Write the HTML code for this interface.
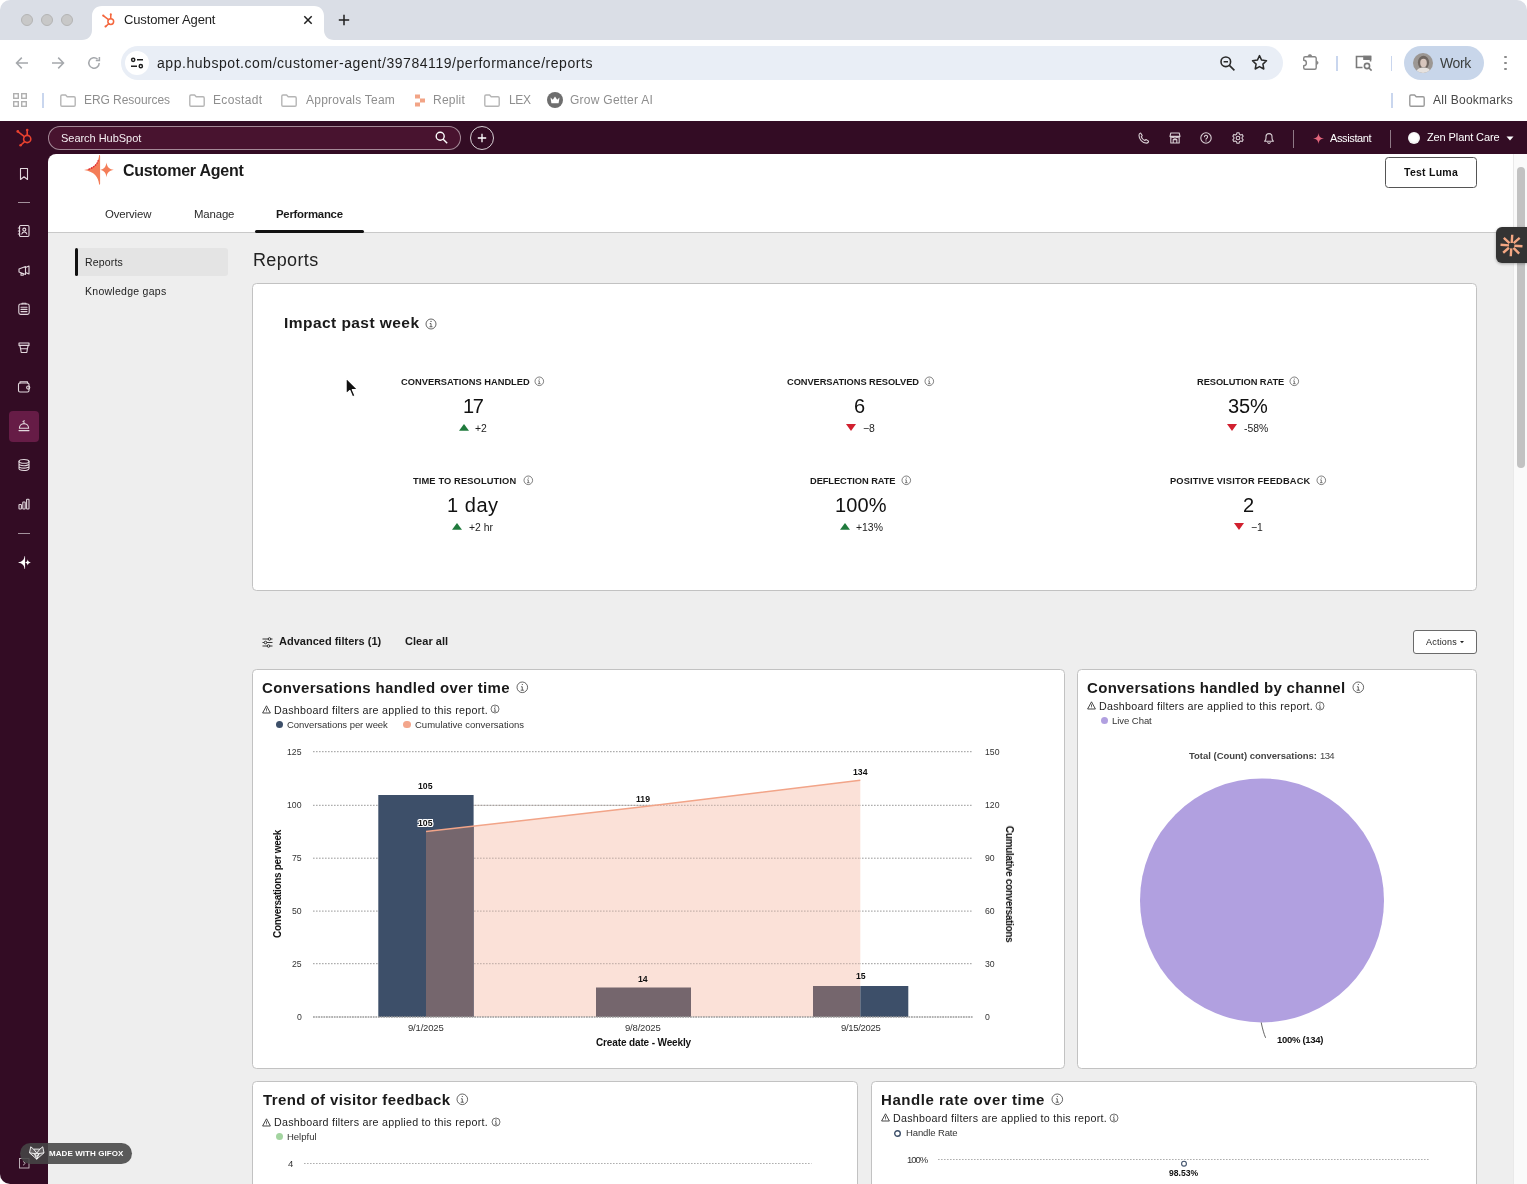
<!DOCTYPE html>
<html lang="en"><head><meta charset="utf-8"><title>Customer Agent</title>
<style>
html,body{margin:0;padding:0;}
body{width:1527px;height:1184px;overflow:hidden;position:relative;background:#fff;font-family:"Liberation Sans",sans-serif;-webkit-font-smoothing:antialiased;}
.t{position:absolute;white-space:nowrap;margin:0;padding:0;will-change:transform;}
.b{position:absolute;box-sizing:border-box;}
svg{position:absolute;overflow:visible;}
</style></head><body>
<div class="b" style="left:0px;top:0px;width:1527px;height:40px;background:#dadee6;border-radius:10px 10px 0 0;"></div>
<svg style="left:82px;top:5px" width="252" height="35" viewBox="0 0 252 35"><path d="M0 35 C6 35 10 31 10 25 L10 11 C10 5 14 1 20 1 L232 1 C238 1 242 5 242 11 L242 25 C242 31 246 35 252 35 Z" fill="#fff"/></svg>
<div class="b" style="left:0px;top:40px;width:1527px;height:81px;background:#fff;border-radius:9px 9px 0 0;"></div>
<div class="b" style="left:21px;top:14px;width:12px;height:12px;background:#c8c8c8;border-radius:50%;border:0.5px solid #b4b4b4;"></div>
<div class="b" style="left:41px;top:14px;width:12px;height:12px;background:#c8c8c8;border-radius:50%;border:0.5px solid #b4b4b4;"></div>
<div class="b" style="left:61px;top:14px;width:12px;height:12px;background:#c8c8c8;border-radius:50%;border:0.5px solid #b4b4b4;"></div>
<svg style="left:100.8px;top:12.2px" width="16" height="16" viewBox="0 0 20 20" fill="none" stroke="#f4673e" stroke-width="1.9" stroke-linecap="round"><circle cx="12.2" cy="12" r="3.6"/><path d="M12.2 8.2V3.6M9.4 9.6L3.2 4.8M9.6 14.6L6 18"/><circle cx="12.2" cy="3" r="1.3" fill="#f4673e" stroke="none"/><circle cx="2.8" cy="4.4" r="1.4" fill="#f4673e" stroke="none"/><circle cx="5.6" cy="18.2" r="1.3" fill="#f4673e" stroke="none"/></svg>
<div class="t" style="left:124.2px;top:10px;font-size:13px;line-height:19px;color:#1f1f1f;font-weight:400;letter-spacing:-0.137px;">Customer Agent</div>
<svg style="left:303px;top:15px" width="10" height="10" viewBox="0 0 10 10" stroke="#1f1f1f" stroke-width="1.5" fill="none"><path d="M1.3 1.3L8.7 8.7M8.7 1.3L1.3 8.7"/></svg>
<svg style="left:338px;top:14px" width="12" height="12" viewBox="0 0 12 12" stroke="#1f1f1f" stroke-width="1.5" fill="none"><path d="M6 0.8V11.2M0.8 6H11.2"/></svg>
<svg style="left:15px;top:56px" width="14" height="14" viewBox="0 0 14 14" stroke="#a5a8ac" stroke-width="1.5" fill="none"><path d="M13 7H1.5M6.8 1.6L1.5 7l5.3 5.4"/></svg>
<svg style="left:51px;top:56px" width="14" height="14" viewBox="0 0 14 14" stroke="#a5a8ac" stroke-width="1.5" fill="none"><path d="M1 7h11.5M7.2 1.6L12.5 7l-5.3 5.4"/></svg>
<svg style="left:87px;top:56px" width="14" height="14" viewBox="0 0 14 14" stroke="#a5a8ac" stroke-width="1.5" fill="none"><path d="M12.2 7a5.2 5.2 0 1 1-1.6-3.8"/><path d="M12.4 1v3.6H8.8" /></svg>
<div class="b" style="left:121px;top:46px;width:1162px;height:34px;background:#e9eef6;border-radius:17px;"></div>
<div class="b" style="left:125px;top:51px;width:24px;height:24px;background:#fff;border-radius:50%;"></div>
<svg style="left:130px;top:56px" width="14" height="14" viewBox="0 0 14 14" stroke="#1f1f1f" stroke-width="1.5" fill="none"><circle cx="3.2" cy="3.8" r="1.6"/><path d="M7 3.8h6M1 10.2h6"/><circle cx="10.8" cy="10.2" r="1.6"/></svg>
<div class="t" style="left:157.0px;top:53px;font-size:14px;line-height:20px;color:#1f1f1f;font-weight:400;letter-spacing:0.548px;">app.hubspot.com/customer-agent/39784119/performance/reports</div>
<svg style="left:1219px;top:55px" width="17" height="17" viewBox="0 0 17 17" stroke="#2a2a2a" stroke-width="1.6" fill="none"><circle cx="6.8" cy="6.8" r="4.8"/><path d="M10.4 10.4L15.4 15.4M4.6 6.8h4.4"/></svg>
<svg style="left:1251px;top:54px" width="17" height="17" viewBox="0 0 17 17" stroke="#2a2a2a" stroke-width="1.5" fill="none" stroke-linejoin="round"><path d="M8.5 1.6l2.1 4.5 4.9.6-3.6 3.4.9 4.9-4.3-2.4-4.3 2.4.9-4.9L1.5 6.7l4.9-.6z"/></svg>
<svg style="left:1300px;top:50px" width="22" height="22" viewBox="0 0 22 22" stroke="#868686" stroke-width="1.400" fill="none" stroke-linejoin="round"><path d="M5.200 6.700H14.700a1.500 1.500 0 0 1 1.500 1.500V17.700a1.500 1.500 0 0 1-1.500 1.500H5.200a1.500 1.500 0 0 1-1.500-1.500V15.600a2.700 2.700 0 0 0 0-5.400V8.200a1.500 1.500 0 0 1 1.500-1.500z"/><path d="M8 6.400a1.900 2 0 0 1 3.800 0zM16.600 10.900a2 1.900 0 0 1 0 3.700z" fill="#868686" stroke-width="0.600"/></svg>
<div class="b" style="left:1336px;top:55.5px;width:1.5px;height:15px;background:#c9d6ee;"></div>
<svg style="left:1355px;top:55px" width="18" height="17" viewBox="0 0 18 17" stroke="#7a7a7a" stroke-width="1.6" fill="none"><path d="M7.5 12.5H1.5V1.5h14v5"/><path d="M9 1.5h6.5v2.6H9z" fill="#7a7a7a"/><circle cx="12" cy="11" r="2.6"/><path d="M14 13l2.6 2.6"/></svg>
<div class="b" style="left:1390.5px;top:55.5px;width:1.5px;height:15px;background:#c9d6ee;"></div>
<div class="b" style="left:1404px;top:46px;width:80px;height:34px;background:#c8d6ea;border-radius:17px;"></div>
<div class="b" style="left:1413px;top:53px;width:20px;height:20px;border-radius:50%;overflow:hidden;background:#9c9793;"><svg style="left:0;top:0" width="20" height="20" viewBox="0 0 20 20"><ellipse cx="10.500" cy="9.500" rx="5.600" ry="6.800" fill="#6f6660"/><ellipse cx="10.500" cy="10" rx="3.300" ry="4.200" fill="#d8c6bd"/><path d="M3 20c.5-4 3.500-5.500 7.500-5.500s7 1.500 7.500 5.500z" fill="#e6e2df"/></svg></div>
<div class="t" style="left:1440.0px;top:53px;font-size:14px;line-height:20px;color:#3c3f3e;font-weight:400;letter-spacing:-0.352px;">Work</div>
<div class="b" style="left:1504px;top:55.8px;width:2.6px;height:2.6px;background:#8a8a8a;border-radius:50%;"></div>
<div class="b" style="left:1504px;top:61.8px;width:2.6px;height:2.6px;background:#8a8a8a;border-radius:50%;"></div>
<div class="b" style="left:1504px;top:67.8px;width:2.6px;height:2.6px;background:#8a8a8a;border-radius:50%;"></div>
<svg style="left:13px;top:93px" width="14" height="14" viewBox="0 0 14 14" stroke="#b0b0b0" stroke-width="1.4" fill="none"><rect x="0.7" y="0.7" width="4.6" height="4.6"/><rect x="8.7" y="0.7" width="4.6" height="4.6"/><rect x="0.7" y="8.7" width="4.6" height="4.6"/><rect x="8.7" y="8.7" width="4.6" height="4.6"/></svg>
<div class="b" style="left:42.3px;top:92.5px;width:1.5px;height:15px;background:#c9d6ee;"></div>
<svg style="left:60px;top:93.5px" width="16" height="13" viewBox="0 0 16 13" stroke="#b5b5b5" stroke-width="1.4" fill="none" stroke-linejoin="round"><path d="M0.8 2.2a1.2 1.2 0 0 1 1.2-1.2h3.6l1.6 1.8h6.8a1.2 1.2 0 0 1 1.2 1.2v7a1.2 1.2 0 0 1-1.2 1.2H2a1.2 1.2 0 0 1-1.2-1.2z"/></svg>
<div class="t" style="left:84.3px;top:91px;font-size:12px;line-height:18px;color:#8e8e8e;font-weight:400;letter-spacing:-0.054px;">ERG Resources</div>
<svg style="left:189px;top:93.5px" width="16" height="13" viewBox="0 0 16 13" stroke="#b5b5b5" stroke-width="1.4" fill="none" stroke-linejoin="round"><path d="M0.8 2.2a1.2 1.2 0 0 1 1.2-1.2h3.6l1.6 1.8h6.8a1.2 1.2 0 0 1 1.2 1.2v7a1.2 1.2 0 0 1-1.2 1.2H2a1.2 1.2 0 0 1-1.2-1.2z"/></svg>
<div class="t" style="left:213.2px;top:91px;font-size:12px;line-height:18px;color:#8e8e8e;font-weight:400;letter-spacing:0.351px;">Ecostadt</div>
<svg style="left:281px;top:93.5px" width="16" height="13" viewBox="0 0 16 13" stroke="#b5b5b5" stroke-width="1.4" fill="none" stroke-linejoin="round"><path d="M0.8 2.2a1.2 1.2 0 0 1 1.2-1.2h3.6l1.6 1.8h6.8a1.2 1.2 0 0 1 1.2 1.2v7a1.2 1.2 0 0 1-1.2 1.2H2a1.2 1.2 0 0 1-1.2-1.2z"/></svg>
<div class="t" style="left:305.5px;top:91px;font-size:12px;line-height:18px;color:#8e8e8e;font-weight:400;letter-spacing:0.227px;">Approvals Team</div>
<svg style="left:414px;top:93.5px" width="12" height="13" viewBox="0 0 12 13"><path d="M1 0.5h5v4H1zM6 4.5h5v4H6zM1 8.5h5v4H1z" fill="#f2a486"/></svg>
<div class="t" style="left:433.3px;top:91px;font-size:12px;line-height:18px;color:#8e8e8e;font-weight:400;letter-spacing:0.220px;">Replit</div>
<svg style="left:484px;top:93.5px" width="16" height="13" viewBox="0 0 16 13" stroke="#b5b5b5" stroke-width="1.4" fill="none" stroke-linejoin="round"><path d="M0.8 2.2a1.2 1.2 0 0 1 1.2-1.2h3.6l1.6 1.8h6.8a1.2 1.2 0 0 1 1.2 1.2v7a1.2 1.2 0 0 1-1.2 1.2H2a1.2 1.2 0 0 1-1.2-1.2z"/></svg>
<div class="t" style="left:508.5px;top:91px;font-size:12px;line-height:18px;color:#8e8e8e;font-weight:400;letter-spacing:-0.394px;">LEX</div>
<div class="b" style="left:547px;top:92px;width:16px;height:16px;background:#6e6e6e;border-radius:50%;"></div>
<svg style="left:550px;top:96px" width="10" height="8" viewBox="0 0 10 8"><path d="M0.5 1.5l2.3 2.2L5 0.6l2.2 3.1 2.3-2.2-0.9 5.7H1.4z" fill="#fff"/></svg>
<div class="t" style="left:569.5px;top:91px;font-size:12px;line-height:18px;color:#8e8e8e;font-weight:400;letter-spacing:0.260px;">Grow Getter AI</div>
<div class="b" style="left:1391px;top:92.5px;width:1.5px;height:15px;background:#c9d6ee;"></div>
<svg style="left:1408.7px;top:93.5px" width="16" height="13" viewBox="0 0 16 13" stroke="#9a9a9a" stroke-width="1.4" fill="none" stroke-linejoin="round"><path d="M0.8 2.2a1.2 1.2 0 0 1 1.2-1.2h3.6l1.6 1.8h6.8a1.2 1.2 0 0 1 1.2 1.2v7a1.2 1.2 0 0 1-1.2 1.2H2a1.2 1.2 0 0 1-1.2-1.2z"/></svg>
<div class="t" style="left:1433.0px;top:91px;font-size:12px;line-height:18px;color:#484848;font-weight:400;letter-spacing:0.255px;">All Bookmarks</div>
<div class="b" style="left:0px;top:121px;width:1527px;height:1063px;background:#330c24;border-radius:0 0 0 10px;"></div>
<div class="b" style="left:48px;top:154px;width:1479px;height:1030px;background:#fff;border-radius:8px 0 0 0;"></div>
<div class="b" style="left:48px;top:233px;width:1465px;height:951px;background:#eeeeee;"></div>
<div class="b" style="left:48px;top:232px;width:1465px;height:1px;background:#c9c9c9;"></div>
<div class="b" style="left:1513px;top:154px;width:14px;height:1030px;background:#fafafa;border-left:1px solid #e9e9e9;"></div>
<div class="b" style="left:1517px;top:167px;width:8px;height:301px;background:#c2c2c2;border-radius:4px;"></div>
<svg style="left:15px;top:127px" width="20" height="20" viewBox="0 0 20 20" fill="none" stroke="#e8412f" stroke-width="1.6" stroke-linecap="round"><circle cx="12.2" cy="12" r="3.6"/><path d="M12.2 8.2V3.6M9.4 9.6L3.2 4.8M9.6 14.6L6 18"/><circle cx="12.2" cy="3" r="1.3" fill="#e8412f" stroke="none"/><circle cx="2.8" cy="4.4" r="1.4" fill="#e8412f" stroke="none"/><circle cx="5.6" cy="18.2" r="1.3" fill="#e8412f" stroke="none"/></svg>
<div class="b" style="left:48px;top:126px;width:413px;height:24px;background:#48132f;border-radius:12px;border:1px solid rgba(255,255,255,.5);"></div>
<div class="t" style="left:61.3px;top:130px;font-size:11px;line-height:16px;color:#f4eef1;font-weight:400;letter-spacing:-0.030px;">Search HubSpot</div>
<svg style="left:435px;top:131px" width="13" height="13" viewBox="0 0 13 13" stroke="#fff" stroke-width="1.4" fill="none"><circle cx="5.2" cy="5.2" r="4"/><path d="M8.2 8.2L12.2 12.2"/></svg>
<div class="b" style="left:470px;top:126px;width:24px;height:24px;background:transparent;border-radius:50%;border:1px solid rgba(255,255,255,.8);"></div>
<svg style="left:477px;top:133px" width="10" height="10" viewBox="0 0 10 10" stroke="#fff" stroke-width="1.3" fill="none"><path d="M5 0.8v8.4M0.8 5h8.4"/></svg>
<svg style="left:1138px;top:132px" width="12" height="12" viewBox="0 0 12 12" stroke="#d8ced3" stroke-width="1.1" fill="none" stroke-linejoin="round"><path d="M2.6 1l1.6 2.6-1 1.2c.6 1.6 2 3 3.6 3.700l1.200-1 2.600 1.600c0 1.200-1 2-2.200 2C4.400 11.100.900 7.200 1 3.200 1 2 1.600 1.200 2.600 1z"/></svg>
<svg style="left:1169px;top:132px" width="12" height="12" viewBox="0 0 12 12" stroke="#d8ced3" stroke-width="1.1" fill="none" stroke-linejoin="round"><path d="M1 4.400L1.800 1h8.400L11 4.400zM1.800 4.600V11h8.400V4.600M4.200 11V7.600h3.600V11M1 4.400a1.700 1.700 0 0 0 3.300 0 1.700 1.700 0 0 0 3.400 0 1.700 1.700 0 0 0 3.300 0"/></svg>
<svg style="left:1200px;top:132px" width="12" height="12" viewBox="0 0 12 12" stroke="#d8ced3" stroke-width="1.1" fill="none" stroke-linecap="round"><circle cx="6" cy="6" r="5.2"/><path d="M4.400 4.800a1.600 1.600 0 1 1 2.400 1.400c-.5.300-.8.600-.8 1.100M6 8.900v.1"/></svg>
<svg style="left:1231.5px;top:132px" width="12" height="12" viewBox="0 0 12 12" stroke="#d8ced3" stroke-width="1.1" fill="none" stroke-linejoin="round"><circle cx="6" cy="6" r="1.800"/><path d="M5 0.700h2l.4 1.500 1.300.7 1.500-.5 1 1.800-1.100 1.100v1.400l1.100 1.100-1 1.800-1.500-.5-1.300.7-.4 1.500H5l-.4-1.500-1.300-.7-1.500.5-1-1.800 1.100-1.100V5.300L.800 4.200l1-1.800 1.500.5 1.300-.7z"/></svg>
<svg style="left:1263px;top:132px" width="12" height="12" viewBox="0 0 12 12" stroke="#d8ced3" stroke-width="1.1" fill="none" stroke-linejoin="round" stroke-linecap="round"><path d="M1.600 9.200c1-.8 1.400-1.800 1.400-3.200V4.600a3 3 0 0 1 6 0V6c0 1.400.4 2.400 1.400 3.200zM4.800 10.600a1.300 1.300 0 0 0 2.400 0"/></svg>
<div class="b" style="left:1293px;top:129.5px;width:1px;height:18px;background:rgba(255,255,255,.45);"></div>
<svg style="left:1312.500px;top:132.500px" width="11" height="11" viewBox="0 0 11 11"><path d="M5.500 0C5.900 3.600 7.400 5.100 11 5.500 7.400 5.900 5.900 7.400 5.500 11 5.100 7.400 3.600 5.900 0 5.500 3.600 5.100 5.100 3.600 5.500 0z" fill="#e2657c"/></svg>
<div class="t" style="left:1330.0px;top:130px;font-size:11px;line-height:16px;color:#fff;font-weight:400;letter-spacing:-0.370px;">Assistant</div>
<div class="b" style="left:1390px;top:129.5px;width:1px;height:18px;background:rgba(255,255,255,.45);"></div>
<div class="b" style="left:1407.6px;top:131.6px;width:12.4px;height:12.4px;background:#f2f2f2;border-radius:50%;background:radial-gradient(circle at 50% 45%,#fff 0 40%,#dcdcdc 100%);"></div>
<div class="t" style="left:1427.0px;top:129px;font-size:11px;line-height:16px;color:#fff;font-weight:400;letter-spacing:-0.106px;">Zen Plant Care</div>
<svg style="left:1506px;top:135.500px" width="8" height="5" viewBox="0 0 8 5"><path d="M0.500 0.500h7L4 4.500z" fill="#fff"/></svg>
<svg style="left:17.0px;top:167.0px" width="14" height="14" viewBox="0 0 14 14" stroke="#e2d8dd" stroke-width="1.1" fill="none" stroke-linejoin="round" stroke-linecap="round"><path d="M3.500 1.500h7v11L7 9.800l-3.500 2.700z"/></svg>
<div class="b" style="left:18px;top:202px;width:12px;height:1px;background:rgba(255,255,255,.55);"></div>
<svg style="left:17.0px;top:224.0px" width="14" height="14" viewBox="0 0 14 14" stroke="#e2d8dd" stroke-width="1.1" fill="none" stroke-linejoin="round" stroke-linecap="round"><rect x="2.500" y="1.500" width="9.500" height="11" rx="1.200"/><circle cx="7.300" cy="5.600" r="1.500"/><path d="M4.800 10c.3-1.400 1.300-2 2.500-2s2.200.6 2.500 2M1.300 4h1.600M1.300 7h1.600M1.300 10h1.600"/></svg>
<svg style="left:17.0px;top:263.0px" width="14" height="14" viewBox="0 0 14 14" stroke="#e2d8dd" stroke-width="1.1" fill="none" stroke-linejoin="round" stroke-linecap="round"><path d="M2 6v3l6.500 2.500V3.500zM8.500 4.500l3.500-1.500v8l-3.500-1.500M4 9.800v2.400h2.200v-1.600"/></svg>
<svg style="left:17.0px;top:302.0px" width="14" height="14" viewBox="0 0 14 14" stroke="#e2d8dd" stroke-width="1.1" fill="none" stroke-linejoin="round" stroke-linecap="round"><rect x="1.800" y="2" width="10.400" height="10.400" rx="1.800"/><path d="M4 5.200h6M4 7.400h6M4 9.600h6M5 2V1.200h4V2"/></svg>
<svg style="left:17.0px;top:341.0px" width="14" height="14" viewBox="0 0 14 14" stroke="#e2d8dd" stroke-width="1.1" fill="none" stroke-linejoin="round" stroke-linecap="round"><path d="M2 2h10v2.400H2zM2.800 4.400l.8 3.400h6.800l.8-3.400M3.600 7.800l.6 3.700h5.600l.6-3.700"/></svg>
<svg style="left:17.0px;top:380.0px" width="14" height="14" viewBox="0 0 14 14" stroke="#e2d8dd" stroke-width="1.1" fill="none" stroke-linejoin="round" stroke-linecap="round"><rect x="1.500" y="3" width="10.500" height="9" rx="1.500"/><path d="M3 3V1.800h7.500V3"/><circle cx="11.200" cy="7.600" r="1.600"/></svg>
<div class="b" style="left:9.3px;top:411.3px;width:30px;height:30.4px;background:#661c46;border-radius:4px;"></div>
<svg style="left:17.0px;top:419.2px" width="14" height="14" viewBox="0 0 14 14" stroke="#e2d8dd" stroke-width="1.1" fill="none" stroke-linejoin="round" stroke-linecap="round"><path d="M2.400 9.200a4.600 4.600 0 0 1 9.200 0zM2 11.600h10M7 4.600V3.200M6 2.600l1.400-.8"/></svg>
<svg style="left:17.0px;top:458.0px" width="14" height="14" viewBox="0 0 14 14" stroke="#e2d8dd" stroke-width="1.1" fill="none" stroke-linejoin="round" stroke-linecap="round"><ellipse cx="7" cy="3.400" rx="5" ry="1.900"/><path d="M2 3.400v7.200c0 1 2.200 1.900 5 1.900s5-.9 5-1.900V3.400M2 5.800c0 1 2.200 1.900 5 1.900s5-.9 5-1.900M2 8.200c0 1 2.200 1.900 5 1.900s5-.9 5-1.900"/></svg>
<svg style="left:17.0px;top:497.0px" width="14" height="14" viewBox="0 0 14 14" stroke="#e2d8dd" stroke-width="1.1" fill="none" stroke-linejoin="round" stroke-linecap="round"><rect x="2" y="7.500" width="2.400" height="4.500" rx=".6"/><rect x="5.800" y="5" width="2.400" height="7" rx=".6"/><rect x="9.600" y="2.200" width="2.400" height="9.800" rx=".6"/></svg>
<div class="b" style="left:18px;top:533px;width:12px;height:1px;background:rgba(255,255,255,.55);"></div>
<svg style="left:17.500px;top:555.500px" width="13" height="13" viewBox="0 0 30 30"><path d="M15.200 0C15.900 0 16.300 .4 16.300 1.200V28.600c0 .8-.4 1.200-1.100 1.200C14.200 21.500 10.500 17 0 15 10.500 13 14.200 8.500 15.200 0z" fill="#fff"/><path d="M22.500 7.400c.6 4.300 2.200 6.400 7.300 7.400-5.100 1-6.700 3.100-7.300 7.400-.6-4.300-2.200-6.400-6.300-7.400 4.100-1 5.700-3.100 6.300-7.400z" fill="#fff"/></svg>
<svg style="left:18.500px;top:1157.800px" width="10.500" height="10.500" viewBox="0 0 10.500 10.500" stroke="#cbbfc5" stroke-width="0.9" fill="none"><rect x="0.500" y="0.500" width="9.500" height="9.500"/><path d="M4 3.300l2.300 2-2.300 2"/></svg>
<svg style="left:84px;top:155px" width="30" height="30" viewBox="0 0 30 30"><path d="M15.200 0C15.900 0 16.100 .4 16.100 1.200V28.600c0 .8-.2 1.200-.9 1.200C14.200 21.500 10.500 17 0 15 10.500 13 14.200 8.500 15.200 0z" fill="#f47d58"/><path d="M4.500 14.300C9.500 12.800 12.800 9.800 14.300 5.200" stroke="#d8122a" stroke-width="1.300" fill="none" stroke-dasharray="1.500 1" opacity=".85"/><path d="M22.500 7.400c.6 4.300 2.200 6.400 7.300 7.400-5.100 1-6.700 3.100-7.300 7.400-.6-4.300-2.200-6.400-6.300-7.400 4.100-1 5.700-3.100 6.300-7.400z" fill="#f47d58"/></svg>
<div class="t" style="left:122.9px;top:160px;font-size:16px;line-height:21px;color:#1a1a1a;font-weight:700;letter-spacing:-0.233px;">Customer Agent</div>
<div class="b" style="left:1385px;top:157px;width:92px;height:30.5px;background:#fff;border-radius:3.500px;border:1px solid #555;"></div>
<div class="t" style="left:1404.0px;top:164px;font-size:10.5px;line-height:16px;color:#111;font-weight:700;letter-spacing:0.252px;">Test Luma</div>
<div class="t" style="left:105.0px;top:206px;font-size:11.4px;line-height:16px;color:#2a2a2a;font-weight:400;letter-spacing:-0.151px;">Overview</div>
<div class="t" style="left:193.5px;top:206px;font-size:11.4px;line-height:16px;color:#2a2a2a;font-weight:400;letter-spacing:-0.150px;">Manage</div>
<div class="t" style="left:276.2px;top:206px;font-size:11.4px;line-height:16px;color:#1a1a1a;font-weight:700;letter-spacing:-0.264px;">Performance</div>
<div class="b" style="left:255px;top:229.5px;width:109px;height:3.5px;background:#111;border-radius:2px;"></div>
<div class="b" style="left:1496px;top:227px;width:31px;height:35.5px;background:#333;border-radius:6px 0 0 6px;box-shadow:0 1px 3px rgba(0,0,0,.3);"></div>
<svg style="left:1499.500px;top:233.500px" width="23" height="23" viewBox="-11.500 -11.500 23 23" stroke-width="2.400" stroke-linecap="butt" fill="none"><g stroke="#f3a783" transform="rotate(4)"><path d="M0 -2.500V-10.800M0 2.800V10.800M2.800 0H11M-2.500 0H-11M2 -2.600L7.600 -8.200M-2.400 2.400L-7.800 7.800M2.200 2.200L8.200 7.600M-2.200 -2.200L-8.200 -7"/></g></svg>
<div class="b" style="left:75px;top:248px;width:153px;height:28px;background:#e4e4e4;border-radius:3px;"></div>
<div class="b" style="left:75px;top:248px;width:3px;height:28px;background:#111;border-radius:2px;"></div>
<div class="t" style="left:84.5px;top:254px;font-size:10.5px;line-height:16px;color:#222;font-weight:400;letter-spacing:0.176px;">Reports</div>
<div class="t" style="left:84.5px;top:283px;font-size:10.5px;line-height:16px;color:#222;font-weight:400;letter-spacing:0.275px;">Knowledge gaps</div>
<div class="t" style="left:252.8px;top:248px;font-size:18px;line-height:24px;color:#222;font-weight:400;letter-spacing:0.353px;">Reports</div>
<div class="b" style="left:252px;top:283px;width:1225px;height:307.5px;background:#fff;border:1px solid #c2c2c2;border-radius:4.500px;"></div>
<div class="t" style="left:283.7px;top:312px;font-size:15.5px;line-height:21px;color:#1a1a1a;font-weight:700;letter-spacing:0.446px;">Impact past week</div>
<svg style="left:425px;top:317.5px" width="12" height="12" viewBox="-6 -6 12 12" fill="none" stroke="#333" stroke-width="0.75"><circle r="5"/><path d="M0 -0.50V2.75M-1.25 -0.50H0M-1.50 2.75H1.50" stroke-width="0.75"/><circle cy="-2.60" r="0.550" fill="#333" stroke="none"/></svg>
<div class="t" style="left:400.5px;top:375px;font-size:9.3px;line-height:14px;color:#1a1a1a;font-weight:700;letter-spacing:0.015px;">CONVERSATIONS HANDLED</div>
<svg style="left:534.2px;top:376.29999999999995px" width="10.6" height="10.6" viewBox="-5.3 -5.3 10.6 10.6" fill="none" stroke="#555" stroke-width="0.75"><circle r="4.3"/><path d="M0 -0.43V2.37M-1.07 -0.43H0M-1.29 2.37H1.29" stroke-width="0.75"/><circle cy="-2.24" r="0.550" fill="#555" stroke="none"/></svg>
<div class="t" style="left:462.5px;top:393px;font-size:20px;line-height:26px;color:#111;font-weight:400;letter-spacing:-1.373px;">17</div>
<svg style="left:458.59999999999997px;top:424.4px" width="10" height="6.8" viewBox="0 0 10 6.8"><path d="M0 6.8L5.0 0L10 6.8z" fill="#1f7a3c"/></svg>
<div class="t" style="left:475.1px;top:421px;font-size:10.4px;line-height:15px;color:#222;font-weight:400;">+2</div>
<div class="t" style="left:786.5px;top:375px;font-size:9.3px;line-height:14px;color:#1a1a1a;font-weight:700;letter-spacing:-0.068px;">CONVERSATIONS RESOLVED</div>
<svg style="left:923.7px;top:376.29999999999995px" width="10.6" height="10.6" viewBox="-5.3 -5.3 10.6 10.6" fill="none" stroke="#555" stroke-width="0.75"><circle r="4.3"/><path d="M0 -0.43V2.37M-1.07 -0.43H0M-1.29 2.37H1.29" stroke-width="0.75"/><circle cy="-2.24" r="0.550" fill="#555" stroke="none"/></svg>
<div class="t" style="left:854.4px;top:393px;font-size:20px;line-height:26px;color:#111;font-weight:400;">6</div>
<svg style="left:845.7px;top:424.2px" width="10" height="7" viewBox="0 0 10 7"><path d="M0 0H10L5.0 7z" fill="#d1202f"/></svg>
<div class="t" style="left:862.7px;top:421px;font-size:10.4px;line-height:15px;color:#222;font-weight:400;">−8</div>
<div class="t" style="left:1196.6px;top:375px;font-size:9.3px;line-height:14px;color:#1a1a1a;font-weight:700;letter-spacing:-0.065px;">RESOLUTION RATE</div>
<svg style="left:1288.9px;top:376.29999999999995px" width="10.6" height="10.6" viewBox="-5.3 -5.3 10.6 10.6" fill="none" stroke="#555" stroke-width="0.75"><circle r="4.3"/><path d="M0 -0.43V2.37M-1.07 -0.43H0M-1.29 2.37H1.29" stroke-width="0.75"/><circle cy="-2.24" r="0.550" fill="#555" stroke="none"/></svg>
<div class="t" style="left:1227.6px;top:393px;font-size:20px;line-height:26px;color:#111;font-weight:400;letter-spacing:-0.110px;">35%</div>
<svg style="left:1227.0px;top:424.2px" width="10" height="7" viewBox="0 0 10 7"><path d="M0 0H10L5.0 7z" fill="#d1202f"/></svg>
<div class="t" style="left:1243.9px;top:421px;font-size:10.4px;line-height:15px;color:#222;font-weight:400;">-58%</div>
<div class="t" style="left:413.3px;top:474px;font-size:9.3px;line-height:14px;color:#1a1a1a;font-weight:700;letter-spacing:0.122px;">TIME TO RESOLUTION</div>
<svg style="left:522.7px;top:475.4px" width="10.6" height="10.6" viewBox="-5.3 -5.3 10.6 10.6" fill="none" stroke="#555" stroke-width="0.75"><circle r="4.3"/><path d="M0 -0.43V2.37M-1.07 -0.43H0M-1.29 2.37H1.29" stroke-width="0.75"/><circle cy="-2.24" r="0.550" fill="#555" stroke="none"/></svg>
<div class="t" style="left:447.2px;top:492px;font-size:20px;line-height:26px;color:#111;font-weight:400;letter-spacing:0.535px;">1 day</div>
<svg style="left:452.0px;top:523.4px" width="10" height="6.8" viewBox="0 0 10 6.8"><path d="M0 6.8L5.0 0L10 6.8z" fill="#1f7a3c"/></svg>
<div class="t" style="left:469.1px;top:520px;font-size:10.4px;line-height:15px;color:#222;font-weight:400;">+2 hr</div>
<div class="t" style="left:809.8px;top:474px;font-size:9.3px;line-height:14px;color:#1a1a1a;font-weight:700;letter-spacing:-0.075px;">DEFLECTION RATE</div>
<svg style="left:900.7px;top:475.4px" width="10.6" height="10.6" viewBox="-5.3 -5.3 10.6 10.6" fill="none" stroke="#555" stroke-width="0.75"><circle r="4.3"/><path d="M0 -0.43V2.37M-1.07 -0.43H0M-1.29 2.37H1.29" stroke-width="0.75"/><circle cy="-2.24" r="0.550" fill="#555" stroke="none"/></svg>
<div class="t" style="left:834.5px;top:492px;font-size:20px;line-height:26px;color:#111;font-weight:400;letter-spacing:0.087px;">100%</div>
<svg style="left:840.4px;top:523.4px" width="10" height="6.8" viewBox="0 0 10 6.8"><path d="M0 6.8L5.0 0L10 6.8z" fill="#1f7a3c"/></svg>
<div class="t" style="left:856.1px;top:520px;font-size:10.4px;line-height:15px;color:#222;font-weight:400;">+13%</div>
<div class="t" style="left:1170.0px;top:474px;font-size:9.3px;line-height:14px;color:#1a1a1a;font-weight:700;letter-spacing:0.145px;">POSITIVE VISITOR FEEDBACK</div>
<svg style="left:1316.1000000000001px;top:475.4px" width="10.6" height="10.6" viewBox="-5.3 -5.3 10.6 10.6" fill="none" stroke="#555" stroke-width="0.75"><circle r="4.3"/><path d="M0 -0.43V2.37M-1.07 -0.43H0M-1.29 2.37H1.29" stroke-width="0.75"/><circle cy="-2.24" r="0.550" fill="#555" stroke="none"/></svg>
<div class="t" style="left:1242.6px;top:492px;font-size:20px;line-height:26px;color:#111;font-weight:400;">2</div>
<svg style="left:1233.7px;top:523.1999999999999px" width="10" height="7" viewBox="0 0 10 7"><path d="M0 0H10L5.0 7z" fill="#d1202f"/></svg>
<div class="t" style="left:1250.9px;top:520px;font-size:10.4px;line-height:15px;color:#222;font-weight:400;">−1</div>
<svg style="left:344.500px;top:376.700px" width="14.300" height="22" viewBox="0 0 13 20"><path d="M1 1v14.500l3.400-3.200 2.400 5.700 2.300-1-2.400-5.500H11.500z" fill="#111" stroke="#fff" stroke-width="1.100" stroke-linejoin="round"/></svg>
<svg style="left:262px;top:636.500px" width="11" height="11" viewBox="0 0 11 11" stroke="#222" stroke-width="0.9" fill="none"><path d="M0.500 2h10M0.500 5.500h10M0.500 9h10"/><circle cx="7.500" cy="2" r="1.300" fill="#eee"/><circle cx="3.500" cy="5.500" r="1.300" fill="#eee"/><circle cx="6.500" cy="9" r="1.300" fill="#eee"/></svg>
<div class="t" style="left:278.8px;top:633px;font-size:11px;line-height:16px;color:#1a1a1a;font-weight:700;letter-spacing:0.006px;">Advanced filters (1)</div>
<div class="t" style="left:404.5px;top:633px;font-size:11px;line-height:16px;color:#1a1a1a;font-weight:700;letter-spacing:0.044px;">Clear all</div>
<div class="b" style="left:1413px;top:630px;width:64px;height:24px;background:#fff;border-radius:3px;border:1px solid #6a6a6a;"></div>
<div class="t" style="left:1426.0px;top:635px;font-size:9px;line-height:14px;color:#222;font-weight:400;letter-spacing:0.212px;">Actions</div>
<svg style="left:1460.200px;top:641.200px" width="4" height="2.200" viewBox="0 0 4 2.200"><path d="M0 0h4L2 2.200z" fill="#222"/></svg>
<div class="b" style="left:252px;top:669px;width:813px;height:400px;background:#fff;border:1px solid #c2c2c2;border-radius:4.500px;"></div>
<div class="t" style="left:262.0px;top:677px;font-size:15px;line-height:21px;color:#1a1a1a;font-weight:700;letter-spacing:0.364px;">Conversations handled over time</div>
<svg style="left:516.2px;top:680.9000000000001px" width="12.6" height="12.6" viewBox="-6.3 -6.3 12.6 12.6" fill="none" stroke="#333" stroke-width="0.75"><circle r="5.3"/><path d="M0 -0.53V2.92M-1.32 -0.53H0M-1.59 2.92H1.59" stroke-width="0.75"/><circle cy="-2.76" r="0.550" fill="#333" stroke="none"/></svg>
<svg style="left:261.7px;top:705.2px" width="9" height="9" viewBox="0 0 9 9" stroke="#333" stroke-width="0.9" fill="none" stroke-linejoin="round"><path d="M4.500 0.800L8.400 8H0.600z"/><path d="M4.500 3.400v2.400M4.500 6.700v.4" stroke-width="0.800"/></svg>
<div class="t" style="left:273.7px;top:702px;font-size:10.7px;line-height:16px;color:#222;font-weight:400;letter-spacing:0.266px;">Dashboard filters are applied to this report.</div>
<svg style="left:490.4px;top:704.4000000000001px" width="10" height="10" viewBox="-5 -5 10 10" fill="none" stroke="#444" stroke-width="0.75"><circle r="4"/><path d="M0 -0.40V2.20M-1.00 -0.40H0M-1.20 2.20H1.20" stroke-width="0.75"/><circle cy="-2.08" r="0.550" fill="#444" stroke="none"/></svg>
<div class="b" style="left:1077px;top:669px;width:400px;height:400px;background:#fff;border:1px solid #c2c2c2;border-radius:4.500px;"></div>
<div class="t" style="left:1087.0px;top:677px;font-size:15px;line-height:21px;color:#1a1a1a;font-weight:700;letter-spacing:0.316px;">Conversations handled by channel</div>
<svg style="left:1351.7px;top:680.9000000000001px" width="12.6" height="12.6" viewBox="-6.3 -6.3 12.6 12.6" fill="none" stroke="#333" stroke-width="0.75"><circle r="5.3"/><path d="M0 -0.53V2.92M-1.32 -0.53H0M-1.59 2.92H1.59" stroke-width="0.75"/><circle cy="-2.76" r="0.550" fill="#333" stroke="none"/></svg>
<svg style="left:1086.7px;top:700.6px" width="9" height="9" viewBox="0 0 9 9" stroke="#333" stroke-width="0.9" fill="none" stroke-linejoin="round"><path d="M4.500 0.800L8.400 8H0.600z"/><path d="M4.500 3.400v2.400M4.500 6.700v.4" stroke-width="0.800"/></svg>
<div class="t" style="left:1098.7px;top:698px;font-size:10.7px;line-height:16px;color:#222;font-weight:400;letter-spacing:0.266px;">Dashboard filters are applied to this report.</div>
<svg style="left:1315.4px;top:700.7px" width="10" height="10" viewBox="-5 -5 10 10" fill="none" stroke="#444" stroke-width="0.75"><circle r="4"/><path d="M0 -0.40V2.20M-1.00 -0.40H0M-1.20 2.20H1.20" stroke-width="0.75"/><circle cy="-2.08" r="0.550" fill="#444" stroke="none"/></svg>
<div class="b" style="left:252px;top:1081px;width:606px;height:130px;background:#fff;border:1px solid #c2c2c2;border-radius:4.500px;"></div>
<div class="t" style="left:262.6px;top:1089px;font-size:15px;line-height:21px;color:#1a1a1a;font-weight:700;letter-spacing:0.398px;">Trend of visitor feedback</div>
<svg style="left:456.3px;top:1092.9px" width="12.6" height="12.6" viewBox="-6.3 -6.3 12.6 12.6" fill="none" stroke="#333" stroke-width="0.75"><circle r="5.3"/><path d="M0 -0.53V2.92M-1.32 -0.53H0M-1.59 2.92H1.59" stroke-width="0.75"/><circle cy="-2.76" r="0.550" fill="#333" stroke="none"/></svg>
<svg style="left:262.3px;top:1117.7px" width="9" height="9" viewBox="0 0 9 9" stroke="#333" stroke-width="0.9" fill="none" stroke-linejoin="round"><path d="M4.500 0.800L8.400 8H0.600z"/><path d="M4.500 3.400v2.400M4.500 6.700v.4" stroke-width="0.800"/></svg>
<div class="t" style="left:274.3px;top:1114px;font-size:10.7px;line-height:16px;color:#222;font-weight:400;letter-spacing:0.266px;">Dashboard filters are applied to this report.</div>
<svg style="left:491.0px;top:1116.9px" width="10" height="10" viewBox="-5 -5 10 10" fill="none" stroke="#444" stroke-width="0.75"><circle r="4"/><path d="M0 -0.40V2.20M-1.00 -0.40H0M-1.20 2.20H1.20" stroke-width="0.75"/><circle cy="-2.08" r="0.550" fill="#444" stroke="none"/></svg>
<div class="b" style="left:871px;top:1081px;width:606px;height:130px;background:#fff;border:1px solid #c2c2c2;border-radius:4.500px;"></div>
<div class="t" style="left:881.0px;top:1089px;font-size:15px;line-height:21px;color:#1a1a1a;font-weight:700;letter-spacing:0.545px;">Handle rate over time</div>
<svg style="left:1051.2px;top:1092.9px" width="12.6" height="12.6" viewBox="-6.3 -6.3 12.6 12.6" fill="none" stroke="#333" stroke-width="0.75"><circle r="5.3"/><path d="M0 -0.53V2.92M-1.32 -0.53H0M-1.59 2.92H1.59" stroke-width="0.75"/><circle cy="-2.76" r="0.550" fill="#333" stroke="none"/></svg>
<svg style="left:880.6999999999999px;top:1112.8px" width="9" height="9" viewBox="0 0 9 9" stroke="#333" stroke-width="0.9" fill="none" stroke-linejoin="round"><path d="M4.500 0.800L8.400 8H0.600z"/><path d="M4.500 3.400v2.400M4.500 6.700v.4" stroke-width="0.800"/></svg>
<div class="t" style="left:892.7px;top:1110px;font-size:10.7px;line-height:16px;color:#222;font-weight:400;letter-spacing:0.266px;">Dashboard filters are applied to this report.</div>
<svg style="left:1109.3999999999999px;top:1112.9px" width="10" height="10" viewBox="-5 -5 10 10" fill="none" stroke="#444" stroke-width="0.75"><circle r="4"/><path d="M0 -0.40V2.20M-1.00 -0.40H0M-1.20 2.20H1.20" stroke-width="0.75"/><circle cy="-2.08" r="0.550" fill="#444" stroke="none"/></svg>
<div class="b" style="left:275.9px;top:721.1px;width:7.2px;height:7.2px;background:#3d4f69;border-radius:50%;"></div>
<div class="t" style="left:287.0px;top:717px;font-size:9.5px;line-height:15px;color:#333;font-weight:400;letter-spacing:-0.051px;">Conversations per week</div>
<div class="b" style="left:403.4px;top:721.1px;width:7.2px;height:7.2px;background:#f3a68c;border-radius:50%;"></div>
<div class="t" style="left:414.7px;top:717px;font-size:9.5px;line-height:15px;color:#333;font-weight:400;letter-spacing:0.009px;">Cumulative conversations</div>
<div class="b" style="left:1100.7px;top:717.0px;width:7.2px;height:7.2px;background:#b1a0e0;border-radius:50%;"></div>
<div class="t" style="left:1112.0px;top:713px;font-size:9.5px;line-height:15px;color:#333;font-weight:400;letter-spacing:-0.048px;">Live Chat</div>
<div class="b" style="left:275.9px;top:1133.1000000000001px;width:7.2px;height:7.2px;background:#a3d4a0;border-radius:50%;"></div>
<div class="t" style="left:287.0px;top:1129px;font-size:9.5px;line-height:15px;color:#333;font-weight:400;letter-spacing:-0.010px;">Helpful</div>
<svg style="left:893px;top:1128.500px" width="9" height="9" viewBox="0 0 9 9"><circle cx="4.500" cy="4.500" r="2.800" fill="#fff" stroke="#3d4f69" stroke-width="1.400"/></svg>
<div class="t" style="left:906.0px;top:1125px;font-size:9.5px;line-height:15px;color:#333;font-weight:400;letter-spacing:-0.119px;">Handle Rate</div>
<svg style="left:0;top:0" width="1527" height="1184" viewBox="0 0 1527 1184"><path d="M313 751.7H973" stroke="#8e8e8e" stroke-width="0.9" stroke-dasharray="1.6 1.4" fill="none"/><path d="M313 805.3H973" stroke="#8e8e8e" stroke-width="0.9" stroke-dasharray="1.6 1.4" fill="none"/><path d="M313 858.2H973" stroke="#8e8e8e" stroke-width="0.9" stroke-dasharray="1.6 1.4" fill="none"/><path d="M313 911.1H973" stroke="#8e8e8e" stroke-width="0.9" stroke-dasharray="1.6 1.4" fill="none"/><path d="M313 963.7H973" stroke="#8e8e8e" stroke-width="0.9" stroke-dasharray="1.6 1.4" fill="none"/><path d="M426 831.5L643 806.8L860.300 780.3V1017.0H426z" fill="#fbe1d8"/><path d="M426 805.3H860" stroke="#9c8d89" stroke-width="0.9" stroke-dasharray="1.6 1.4" fill="none" opacity="0.75"/><path d="M426 858.2H860" stroke="#9c8d89" stroke-width="0.9" stroke-dasharray="1.6 1.4" fill="none" opacity="0.75"/><path d="M426 911.1H860" stroke="#9c8d89" stroke-width="0.9" stroke-dasharray="1.6 1.4" fill="none" opacity="0.75"/><path d="M426 963.7H860" stroke="#9c8d89" stroke-width="0.9" stroke-dasharray="1.6 1.4" fill="none" opacity="0.75"/><rect x="378.300" y="795.0" width="95.300" height="222.0" fill="#3d4f69"/><path d="M426 831.5L473.600 826.1V1017.0H426z" fill="#75666d"/><rect x="596" y="987.5" width="95" height="29.5" fill="#75666d"/><rect x="813" y="986.0" width="47.300" height="31.0" fill="#75666d"/><rect x="860.300" y="986.0" width="48" height="31.0" fill="#3d4f69"/><path d="M426 831.5L643 806.8L860.300 780.3" stroke="#f2a488" stroke-width="1.500" fill="none"/><path d="M313 1017.0H973" stroke="#9a9a9a" stroke-width="1.400" stroke-dasharray="1.800 0.800" fill="none"/><circle cx="1262" cy="900.400" r="122" fill="#b1a0e0"/><path d="M1261.200 1022.400C1262.500 1029 1264 1034 1265.600 1037.800" stroke="#666" stroke-width="1" fill="none"/><path d="M304 1163.500H811.500" stroke="#9a9a9a" stroke-width="0.8" stroke-dasharray="1.6 1.4" fill="none"/><path d="M938 1159.500H1429" stroke="#9a9a9a" stroke-width="0.8" stroke-dasharray="1.6 1.4" fill="none"/><circle cx="1184" cy="1163.700" r="2.400" fill="#fff" stroke="#3d4f69" stroke-width="1.100"/></svg>
<div class="t" style="left:297.0px;top:1010px;font-size:8.7px;line-height:14px;color:#333;font-weight:400;">0</div>
<div class="t" style="left:292.1px;top:957px;font-size:8.7px;line-height:14px;color:#333;font-weight:400;">25</div>
<div class="t" style="left:292.1px;top:904px;font-size:8.7px;line-height:14px;color:#333;font-weight:400;">50</div>
<div class="t" style="left:292.1px;top:851px;font-size:8.7px;line-height:14px;color:#333;font-weight:400;">75</div>
<div class="t" style="left:287.3px;top:798px;font-size:8.7px;line-height:14px;color:#333;font-weight:400;">100</div>
<div class="t" style="left:287.3px;top:745px;font-size:8.7px;line-height:14px;color:#333;font-weight:400;">125</div>
<div class="t" style="left:985.0px;top:1010px;font-size:8.7px;line-height:14px;color:#333;font-weight:400;">0</div>
<div class="t" style="left:985.0px;top:957px;font-size:8.7px;line-height:14px;color:#333;font-weight:400;">30</div>
<div class="t" style="left:985.0px;top:904px;font-size:8.7px;line-height:14px;color:#333;font-weight:400;">60</div>
<div class="t" style="left:985.0px;top:851px;font-size:8.7px;line-height:14px;color:#333;font-weight:400;">90</div>
<div class="t" style="left:985.0px;top:798px;font-size:8.7px;line-height:14px;color:#333;font-weight:400;">120</div>
<div class="t" style="left:985.0px;top:745px;font-size:8.7px;line-height:14px;color:#333;font-weight:400;">150</div>
<div class="t" style="left:418.4px;top:779px;font-size:8.7px;line-height:14px;color:#111;font-weight:700;">105</div>
<div class="t" style="left:418.4px;top:816px;font-size:8.7px;line-height:14px;color:#111;font-weight:700;text-shadow:-1px 0 0 #fff,1px 0 0 #fff,0 -1px 0 #fff,0 1px 0 #fff,-1px -1px 0 #fff,1px 1px 0 #fff,-1px 1px 0 #fff,1px -1px 0 #fff;">105</div>
<div class="t" style="left:635.7px;top:792px;font-size:8.7px;line-height:14px;color:#111;font-weight:700;">119</div>
<div class="t" style="left:852.7px;top:765px;font-size:8.7px;line-height:14px;color:#111;font-weight:700;">134</div>
<div class="t" style="left:638.2px;top:972px;font-size:8.7px;line-height:14px;color:#111;font-weight:700;">14</div>
<div class="t" style="left:855.5px;top:969px;font-size:8.7px;line-height:14px;color:#111;font-weight:700;">15</div>
<div class="t" style="left:408.2px;top:1020px;font-size:9.5px;line-height:15px;color:#333;font-weight:400;letter-spacing:-0.185px;">9/1/2025</div>
<div class="t" style="left:625.2px;top:1020px;font-size:9.5px;line-height:15px;color:#333;font-weight:400;letter-spacing:-0.185px;">9/8/2025</div>
<div class="t" style="left:840.8px;top:1020px;font-size:9.5px;line-height:15px;color:#333;font-weight:400;letter-spacing:-0.307px;">9/15/2025</div>
<div class="t" style="left:595.9px;top:1035px;font-size:10px;line-height:15px;color:#111;font-weight:700;letter-spacing:-0.132px;">Create date - Weekly</div>
<div class="t" style="left:277.5px;top:884.0px;font-size:10px;line-height:10px;font-weight:700;color:#111;letter-spacing:-0.320px;transform:translate(-50%,-50%) rotate(-90deg);">Conversations per week</div>
<div class="t" style="left:1009.2px;top:884.2px;font-size:10px;line-height:10px;font-weight:700;color:#111;letter-spacing:-0.337px;transform:translate(-50%,-50%) rotate(90deg);">Cumulative conversations</div>
<div class="t" style="left:1189.4px;top:748px;font-size:9.5px;line-height:15px;color:#444;font-weight:700;letter-spacing:-0.022px;">Total (Count) conversations:</div>
<div class="t" style="left:1320.3px;top:748px;font-size:9.5px;line-height:15px;color:#444;font-weight:400;letter-spacing:-0.617px;">134</div>
<div class="t" style="left:1277.0px;top:1032px;font-size:9.5px;line-height:15px;color:#111;font-weight:700;letter-spacing:-0.312px;">100% (134)</div>
<div class="t" style="left:287.6px;top:1156px;font-size:9.5px;line-height:15px;color:#333;font-weight:400;">4</div>
<div class="t" style="left:907.0px;top:1152px;font-size:9.5px;line-height:15px;color:#333;font-weight:400;letter-spacing:-1.074px;">100%</div>
<div class="t" style="left:1169.4px;top:1166px;font-size:8.6px;line-height:14px;color:#111;font-weight:700;">98.53%</div>
<div class="b" style="left:20px;top:1143px;width:111.5px;height:20.5px;background:rgba(70,70,70,.88);border-radius:10.500px;"></div>
<svg style="left:28.800px;top:1146.300px" width="15.500" height="14" viewBox="0 0 16 14" fill="none" stroke="#fff" stroke-width="0.9" stroke-linejoin="round"><path d="M1.800 0.600l3 2.400h6.400l3-2.400 1.300 6.200L8 13.400 0.500 6.800z" fill="rgba(255,255,255,.18)"/><path d="M4.800 3L8 7.200 11.200 3M0.500 6.800L5.600 7.600 8 13.400l2.400-5.800 5.100-.8M5.600 7.600h4.800L8 10.600z"/></svg>
<div class="t" style="left:49.0px;top:1147px;font-size:8px;line-height:13px;color:#fff;font-weight:700;letter-spacing:0.078px;">MADE WITH GIFOX</div>
</body></html>
